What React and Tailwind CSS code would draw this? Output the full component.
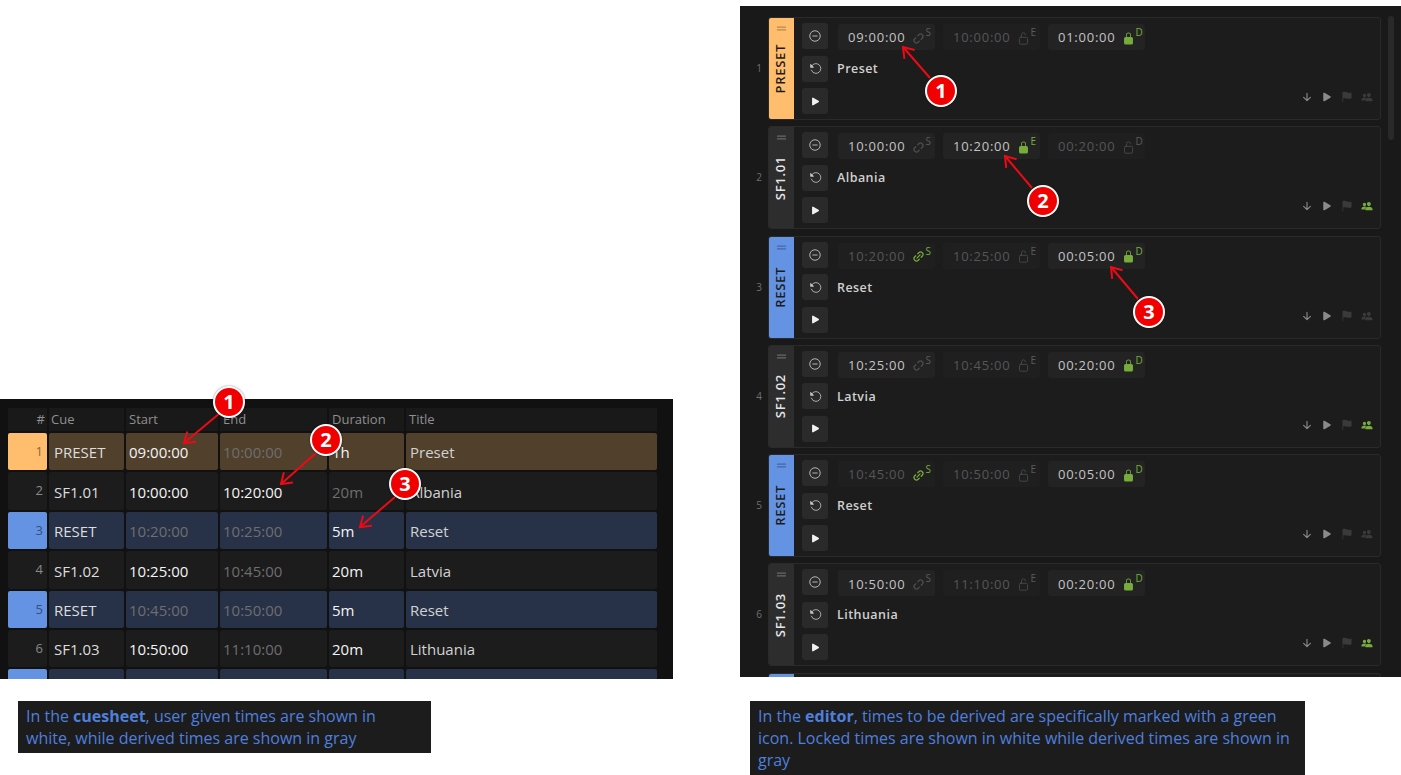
import {
  IoArrowDown, IoFlag, IoLink, IoLockClosed, IoLockOpenOutline, IoPeople, IoPlay,
  IoReload, IoRemoveCircleOutline, IoReorderTwo, IoUnlink,
} from 'react-icons/io5'

const FONT = "font-['Open_Sans',sans-serif]"

const sheetRows = [
  { n: 1, cue: 'PRESET', start: '09:00:00', end: '10:00:00', dur: '1h', title: 'Preset', tone: 'preset', given: ['start', 'dur'] },
  { n: 2, cue: 'SF1.01', start: '10:00:00', end: '10:20:00', dur: '20m', title: 'Albania', given: ['start', 'end'] },
  { n: 3, cue: 'RESET', start: '10:20:00', end: '10:25:00', dur: '5m', title: 'Reset', tone: 'reset', given: ['dur'] },
  { n: 4, cue: 'SF1.02', start: '10:25:00', end: '10:45:00', dur: '20m', title: 'Latvia', given: ['start', 'dur'] },
  { n: 5, cue: 'RESET', start: '10:45:00', end: '10:50:00', dur: '5m', title: 'Reset', tone: 'reset', given: ['dur'] },
  { n: 6, cue: 'SF1.03', start: '10:50:00', end: '11:10:00', dur: '20m', title: 'Lithuania', given: ['start', 'dur'] },
  { n: '', cue: '', start: '', end: '', dur: '', title: '', tone: 'reset', given: [] },
]

const editorRows = [
  { n: 1, cue: 'PRESET', title: 'Preset', bar: 'preset', s: '09:00:00', e: '10:00:00', d: '01:00:00', lock: 'sd', people: false },
  { n: 2, cue: 'SF1.01', title: 'Albania', s: '10:00:00', e: '10:20:00', d: '00:20:00', lock: 'se', people: true },
  { n: 3, cue: 'RESET', title: 'Reset', bar: 'reset', s: '10:20:00', e: '10:25:00', d: '00:05:00', lock: 'd', people: false },
  { n: 4, cue: 'SF1.02', title: 'Latvia', s: '10:25:00', e: '10:45:00', d: '00:20:00', lock: 'sd', people: true },
  { n: 5, cue: 'RESET', title: 'Reset', bar: 'reset', s: '10:45:00', e: '10:50:00', d: '00:05:00', lock: 'd', people: false },
  { n: 6, cue: 'SF1.03', title: 'Lithuania', s: '10:50:00', e: '11:10:00', d: '00:20:00', lock: 'sd', people: true },
  { n: 7, cue: '', title: '', bar: 'reset', s: '', e: '', d: '', lock: '', people: false },
]

const toneBg = { preset: 'bg-[#50402c]', reset: 'bg-[#273248]' }
const swatch = { preset: 'bg-[#ffbd6d] text-[#8a6a3f]', reset: 'bg-[#6593e3] text-[#34507f]' }

function Cell({ children, tone, className = '' }) {
  return (
    <div className={`flex items-center rounded-[2px] overflow-hidden whitespace-nowrap ${toneBg[tone] || 'bg-[#1c1c1c]'} ${className}`}>
      {children}
    </div>
  )
}

function Cuesheet() {
  const head = 'h-[23px] bg-[#191919] text-[#8f8f8f] text-[13px] flex items-center'
  const body = 'pt-[2px] text-[15px]'
  return (
    <div className="h-[280px] w-[673px] bg-[#111111] overflow-hidden pl-[8px] pt-[9px]">
      <div className="grid grid-cols-[39px_75px_92px_107px_75px_251px] gap-x-[2px] gap-y-[2px] auto-rows-[37.4px] [grid-template-rows:23px]">
        <div className={`${head} justify-end pr-[2px]`}>#</div>
        <div className={`${head} pl-[2px]`}>Cue</div>
        <div className={`${head} pl-[3px]`}>Start</div>
        <div className={`${head} pl-[3px]`}>End</div>
        <div className={`${head} pl-[3px]`}>Duration</div>
        <div className={`${head} pl-[3px]`}>Title</div>
        {sheetRows.map((r, i) => {
          const time = (key) => (r.given.includes(key) ? 'text-[#f4f4f4]' : 'text-[#6e6e6e]')
          return [
            <Cell key={`${i}n`} className={`justify-end pr-[4px] text-[13px] ${r.tone ? swatch[r.tone] : 'bg-[#1c1c1c] text-[#8a8a8a]'}`}>{r.n}</Cell>,
            <Cell key={`${i}c`} tone={r.tone} className={`pl-[5px] text-[#dddddd] ${body}`}>{r.cue}</Cell>,
            <Cell key={`${i}s`} tone={r.tone} className={`pl-[3px] ${body} ${time('start')}`}>{r.start}</Cell>,
            <Cell key={`${i}e`} tone={r.tone} className={`pl-[3px] ${body} ${time('end')}`}>{r.end}</Cell>,
            <Cell key={`${i}d`} tone={r.tone} className={`pl-[3px] ${body} ${time('dur')}`}>{r.dur}</Cell>,
            <Cell key={`${i}t`} tone={r.tone} className={`pl-[4px] text-[#d2d2d2] ${body}`}>{r.title}</Cell>,
          ]
        })}
      </div>
    </div>
  )
}

function TimeField({ value, letter, locked, linkIcon }) {
  const green = 'text-[#77ac3c]'
  const muted = 'text-[#4d4d4d]'
  let icon
  if (linkIcon) {
    icon = locked
      ? <IoUnlink className={`${muted} text-[13px] -rotate-45`} />
      : <IoLink className={`${green} text-[13px] -rotate-45`} />
  } else {
    icon = locked
      ? <IoLockClosed className={`${green} text-[13px]`} />
      : <IoLockOpenOutline className={`${muted} text-[13px]`} />
  }
  const markGreen = linkIcon ? !locked : locked
  return (
    <div className={`w-[97px] h-[26px] rounded-[3px] flex items-center pl-[10px] ${locked ? 'bg-[#232323]' : 'bg-[#1f1f1f]'}`}>
      <span className={`pt-[1.8px] text-[13px] tracking-[0.75px] w-[64px] ${locked ? 'text-[#c4c4c4]' : 'text-[#565656]'}`}>{value}</span>
      <span className="mt-[2px]">{icon}</span>
      <span className={`text-[10px] ml-[0.5px] -mt-[9px] ${markGreen ? green : 'text-[#5a5a5a]'}`}>{letter}</span>
    </div>
  )
}

function SideButton({ children }) {
  return <div className="w-[26px] h-[26px] rounded-[3px] bg-[#2a2a2a] flex items-center justify-center text-[#c8c8c8]">{children}</div>
}

function EditorCard({ row }) {
  const barBg = row.bar === 'preset' ? 'bg-[#ffbd6d] text-[#1c1c1c]' : row.bar === 'reset' ? 'bg-[#6593e3] text-[#1c1c1c]' : 'bg-[#2d2d2d] text-[#e6e6e6]'
  const dragColour = row.bar === 'preset' ? 'text-[#b58a50]' : row.bar === 'reset' ? 'text-[#44689f]' : 'text-[#6a6a6a]'
  return (
    <div className="flex items-center h-[103px] mb-[6.3px] shrink-0">
      <div className="w-[28px] pr-[6px] text-right text-[10px] text-[#707070]">{row.n}</div>
      <div className="flex-1 h-full flex rounded-[3px] border border-[#2a2a2a] bg-[#1c1c1c] overflow-hidden">
        <div className={`relative w-[26px] -ml-px -my-px shrink-0 flex items-center justify-center ${barBg}`}>
          <IoReorderTwo className={`absolute top-[4px] text-[15px] ${dragColour}`} />
          <span className="[writing-mode:vertical-rl] rotate-180 text-[13px] font-semibold tracking-[0.7px] whitespace-nowrap">{row.cue}</span>
        </div>
        <div className="flex flex-col gap-[6.5px] ml-[8px] mt-[5px]">
          <SideButton><IoRemoveCircleOutline className="text-[14px]" /></SideButton>
          <SideButton><IoReload className="text-[13px] -scale-x-100" /></SideButton>
          <SideButton><IoPlay className="text-[11px] text-[#f0f0f0]" /></SideButton>
        </div>
        <div className="flex-1 ml-[10px] mt-[6px] flex flex-col">
          <div className="flex gap-[8px]">
            <TimeField value={row.s} letter="S" locked={row.lock.includes('s')} linkIcon />
            <TimeField value={row.e} letter="E" locked={row.lock.includes('e')} />
            <TimeField value={row.d} letter="D" locked={row.lock.includes('d')} />
          </div>
          <div className="mt-[10px] -ml-px text-[12.5px] font-semibold tracking-[0.45px] text-[#d0d0d0]">{row.title}</div>
          <div className="mt-auto mb-[16px] mr-[7px] flex justify-end items-center gap-[8px] text-[12px]">
            <IoArrowDown className="text-[#8a8a8a]" />
            <IoPlay className="text-[#8a8a8a]" />
            <IoFlag className="text-[#3a3a3a]" />
            <IoPeople className={row.people ? 'text-[#77ac3c]' : 'text-[#3a3a3a]'} />
          </div>
        </div>
      </div>
    </div>
  )
}

function Editor() {
  return (
    <div className="h-[671px] w-[661px] bg-[#191919] overflow-hidden flex">
      <div className="w-[641px] pt-[11px] flex flex-col">
        {editorRows.map((r) => <EditorCard key={r.n} row={r} />)}
      </div>
      <div className="w-[6px] h-[124px] mt-[10px] ml-[7px] rounded-[3px] bg-[#292929]" />
    </div>
  )
}

function Caption({ className, children }) {
  return <div className={`bg-[#1c1c1c] text-[#4f7fdd] text-[16px] leading-[22px] pl-[8px] pr-[12px] py-[4px] ${className}`}>{children}</div>
}

// callouts sit over the screenshots: [badge x, badge y, arrow from, arrow to]
const callouts = [
  { n: 1, x: 229, y: 402, from: [220, 413], to: [184, 443] },
  { n: 2, x: 326, y: 440, from: [316, 453], to: [281, 484] },
  { n: 3, x: 405, y: 484, from: [395, 497], to: [360, 527] },
  { n: 1, x: 941, y: 91, from: [930, 78], to: [903, 47] },
  { n: 2, x: 1043, y: 201, from: [1032, 188], to: [1005, 156] },
  { n: 3, x: 1149, y: 312, from: [1138, 299], to: [1111, 267] },
]

function arrowHead([x1, y1], [x2, y2]) {
  const a = Math.atan2(y1 - y2, x1 - x2)
  const p = (d) => `${x2 + 12 * Math.cos(a + d)},${y2 + 12 * Math.sin(a + d)}`
  return `M${p(0.6)} L${x2},${y2} L${p(-0.6)}`
}

export default function App() {
  return (
    <div className={`relative w-[1401px] h-[775px] overflow-hidden bg-white flex ${FONT}`}>
      <div className="w-[740px] pt-[399px] shrink-0">
        <Cuesheet />
        <Caption className="mt-[22px] ml-[18px] w-[413px]">
          In the <b>cuesheet</b>, user given times are shown in white, while derived times are shown in gray
        </Caption>
      </div>
      <div className="w-[661px] pt-[6px] shrink-0">
        <Editor />
        <Caption className="mt-[24px] ml-[10px] w-[555px]">
          In the <b>editor</b>, times to be derived are specifically marked with a green icon. Locked times are shown in white while derived times are shown in gray
        </Caption>
      </div>

      <svg className="absolute inset-0 pointer-events-none" width="1401" height="775">
        {callouts.map((c, i) => (
          <g key={i} fill="none" stroke="#ee0a14" strokeWidth="2">
            <line x1={c.from[0]} y1={c.from[1]} x2={c.to[0]} y2={c.to[1]} />
            <path d={arrowHead(c.from, c.to)} />
          </g>
        ))}
      </svg>
      {callouts.map((c, i) => (
        <div
          key={i}
          className="absolute w-[32px] h-[32px] -ml-[16px] -mt-[16px] rounded-full bg-[#f00000] border-[2px] border-white flex items-center justify-center text-white font-bold text-[20px] shadow-[0_0_2px_rgba(0,0,0,0.5)]"
          style={{ left: c.x, top: c.y }}
        >
          {c.n}
        </div>
      ))}
    </div>
  )
}
